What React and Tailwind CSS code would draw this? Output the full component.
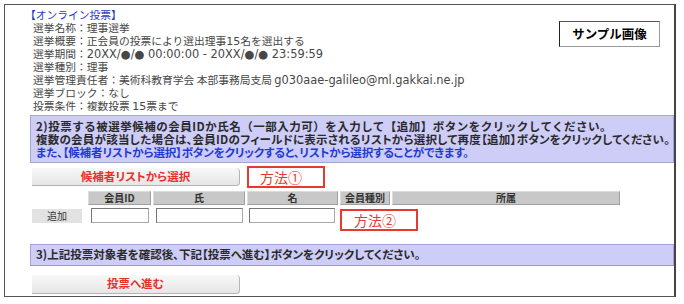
export default function App() {
  const latin = "font-['DejaVu_Sans',sans-serif] text-[11px] leading-none"
  const line = "h-[13px] whitespace-nowrap"
  const head =
    "h-[14px] flex items-center justify-center bg-[#c8c8c8] border border-[#a0a0a0] border-t-[#dcdcdc] border-l-[#dcdcdc] text-[10px] font-bold text-[#333] leading-none"
  const input = "h-[15px] bg-white border border-[#a8a8a8] border-t-[#777] border-l-[#777]"

  return (
    <div className="w-[684px] h-[304px] bg-white font-['Noto_Sans_CJK_JP',sans-serif] text-[#474747]">
      <div className="relative ml-[4px] mt-[4px] w-[672px] h-[293px] border border-[#555] border-r-2 border-r-[#444]">
        {/* 選挙情報 */}
        <div className="pt-[3px] pl-[20px] text-[10.75px] leading-[13px]">
          <p className={`${line} text-[#2b3cc0]`}>【オンライン投票】</p>
          <div className="pl-[8px]">
            <p className={line}>選挙名称：理事選挙</p>
            <p className={line}>
              選挙概要：正会員の投票により選出理事<span className={latin}>15</span>名を選出する
            </p>
            <p className={line}>
              選挙期間：<span className="font-['DejaVu_Sans',sans-serif] text-[11.4px] leading-none">20XX/●/● 00:00:00 - 20XX/●/● 23:59:59</span>
            </p>
            <p className={line}>選挙種別：理事</p>
            <p className={line}>
              選挙管理責任者：美術科教育学会 本部事務局支局{" "}
              <span className="font-['DejaVu_Sans',sans-serif] text-[11.4px] leading-none">
                g030aae-galileo@ml.gakkai.ne.jp
              </span>
            </p>
            <p className={line}>選挙ブロック：なし</p>
            <p className={line}>
              投票条件：複数投票 <span className={latin}>15</span>票まで
            </p>
          </div>
        </div>

        <div className="absolute left-[554px] top-[16px] w-[101px] h-[26px] flex items-center justify-center border border-[#999] border-l-[#222] border-t-[#555] text-[12.5px] font-bold text-black">
          サンプル画像
        </div>

        {/* 2) */}
        <div className="mt-[3px] ml-[25px] h-[48px] pt-[4px] pl-[5px] bg-[#cdcdf8] border border-[#a4a4d4] text-[11.5px] leading-[13px] font-bold text-[#2a2a2a] whitespace-nowrap">
          <p className="tracking-[0.5px]">2)投票する被選挙候補の会員IDか氏名（一部入力可）を入力して【追加】ボタンをクリックしてください。</p>
          <p className="tracking-[0.25px] [font-feature-settings:'palt']">
            複数の会員が該当した場合は、会員IDのフィールドに表示されるリストから選択して再度【追加】ボタンをクリックしてください。
          </p>
          <p className="text-[#1f3bd0] tracking-[-0.15px] [font-feature-settings:'palt']">
            また、【候補者リストから選択】ボタンをクリックすると、リストから選択することができます。
          </p>
        </div>

        <div className="mt-[3px] ml-[27px] flex items-center h-[22px]">
          <button className="w-[208px] h-[18px] rounded-r-[4px] bg-gradient-to-b from-[#f8f8f8] to-[#e6e6e6] border-r border-b border-[#b4b4b4] text-[11.5px] font-bold text-[#e5322d] leading-none [font-feature-settings:'palt']">
            候補者リストから選択
          </button>
          <div className="ml-[7px] w-[78px] h-[22px] border-2 border-[#e8392f] pl-[11px] flex items-center text-[14px] text-[#e8392f] leading-none">
            方法①
          </div>
        </div>

        {/* 入力表 */}
        <div className="mt-[3px] ml-[83px] flex gap-[2px]">
          <div className={`w-[63px] ${head}`}>会員ID</div>
          <div className={`w-[92px] ${head}`}>氏</div>
          <div className={`w-[91px] ${head}`}>名</div>
          <div className={`w-[50px] ${head}`}>会員種別</div>
          <div className={`w-[228px] ${head}`}>所属</div>
        </div>

        <div className="mt-[3px] ml-[27px] flex items-start h-[22px]">
          <button className="mt-[1px] w-[50px] h-[14px] bg-[#e2e2e2] text-[10px] text-[#333] leading-none">
            追加
          </button>
          <div className={`ml-[9px] w-[58px] ${input}`}></div>
          <div className={`ml-[7px] w-[87px] ${input}`}></div>
          <div className={`ml-[6px] w-[86px] ${input}`}></div>
          <div className="ml-[5px] mt-[1px] w-[78px] h-[22px] border-2 border-[#e8392f] pl-[12px] flex items-center text-[14px] text-[#e8392f] leading-none">
            方法②
          </div>
        </div>

        {/* 3) */}
        <div className="mt-[14px] ml-[25px] h-[22px] pl-[5px] flex items-center bg-[#cdcdf8] border border-[#a4a4d4] border-b-[#9a9ab8] text-[11.5px] font-bold text-[#2a2a2a] whitespace-nowrap [font-feature-settings:'palt']">
          3)上記投票対象者を確認後、下記【投票へ進む】ボタンをクリックしてください。
        </div>

        <div className="mt-[3px] ml-[27px]">
          <button className="w-[208px] h-[19px] rounded-r-[4px] bg-gradient-to-b from-[#f8f8f8] to-[#e6e6e6] border-r border-b border-[#b4b4b4] text-[11.5px] font-bold text-[#e5322d] leading-none [font-feature-settings:'palt']">
            投票へ進む
          </button>
        </div>
      </div>
    </div>
  )
}
